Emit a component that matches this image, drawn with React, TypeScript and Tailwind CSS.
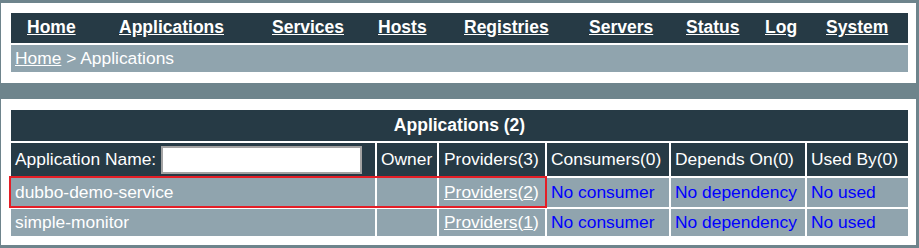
import React from "react";

const navItems: { label: string; w: string }[] = [
  { label: "Home", w: "w-[92px]" },
  { label: "Applications", w: "w-[153px]" },
  { label: "Services", w: "w-[106px]" },
  { label: "Hosts", w: "w-[86px]" },
  { label: "Registries", w: "w-[125px]" },
  { label: "Servers", w: "w-[97px]" },
  { label: "Status", w: "w-[79px]" },
  { label: "Log", w: "w-[61px]" },
  { label: "System", w: "w-[70px]" },
];

const rows = [
  { name: "dubbo-demo-service", n: "2", h: "h-[29px]" },
  { name: "simple-monitor", n: "1", h: "h-[27px]" },
];

export default function App() {
  return (
    <div className="min-h-[248px] bg-[#6e848c] pt-[3px] pl-px pr-[3px] font-['Liberation_Sans',Arial,sans-serif]">
      <div className="bg-white pt-[10px] pb-[11px] pl-[10px] pr-[8px]">
        <div className="flex h-[30px] items-center bg-[#263a45] pl-[16px]">
          {navItems.map((it) => (
            <div key={it.label} className={`${it.w} shrink-0`}>
              <a className="text-[17.5px] font-bold leading-none text-white underline">
                {it.label}
              </a>
            </div>
          ))}
        </div>
        <div className="mt-[2px] flex h-[27px] items-center bg-[#90a4ae] pl-1 text-[17.4px] text-white">
          <a className="underline">Home</a>
          <span>&nbsp;&gt; Applications</span>
        </div>
      </div>
      <div className="h-[16px]" />
      <div className="relative bg-white pt-[11px] pb-[9px] pl-[10px] pr-[8px]">
        <div className="grid grid-cols-[364px_60px_106px_122px_134px_1fr] gap-[2px] text-[17.4px] text-white">
          <div className="col-span-6 flex h-[31px] items-center justify-center bg-[#263a45] text-[17.5px] font-bold">
            Applications (2)
          </div>
          <div className="flex h-[33px] items-center bg-[#263a45] pl-1">
            <span>Application Name:</span>
            <input
              type="text"
              className="ml-[5px] h-[28px] w-[201px] border-2 border-[#a3a3a3] bg-white outline-none"
            />
          </div>
          <div className="flex h-[33px] items-center bg-[#263a45] pl-1">Owner</div>
          <div className="flex h-[33px] items-center bg-[#263a45] pl-[5px]">Providers(3)</div>
          <div className="flex h-[33px] items-center bg-[#263a45] pl-[4px]">Consumers(0)</div>
          <div className="flex h-[33px] items-center bg-[#263a45] pl-[4px]">Depends On(0)</div>
          <div className="flex h-[33px] items-center bg-[#263a45] pl-[4px]">Used By(0)</div>
          {rows.map((r) => (
            <React.Fragment key={r.name}>
              <div className={`flex ${r.h} items-center bg-[#90a4ae] pl-1`}>{r.name}</div>
              <div className={`${r.h} bg-[#90a4ae]`} />
              <div className={`flex ${r.h} items-center bg-[#90a4ae] pl-[5px]`}>
                <a className="underline">Providers</a>(<a className="underline">{r.n}</a>)
              </div>
              <div className={`flex ${r.h} items-center bg-[#90a4ae] pl-[4px] text-[#0000ff]`}>
                No consumer
              </div>
              <div className={`flex ${r.h} items-center bg-[#90a4ae] pl-[4px] text-[#0000ff]`}>
                No dependency
              </div>
              <div className={`flex ${r.h} items-center bg-[#90a4ae] pl-[4px] text-[#0000ff]`}>
                No used
              </div>
            </React.Fragment>
          ))}
        </div>
        <div className="pointer-events-none absolute left-[8px] top-[77px] h-[32px] w-[538px] border-2 border-[#e41e26]" />
      </div>
    </div>
  );
}
